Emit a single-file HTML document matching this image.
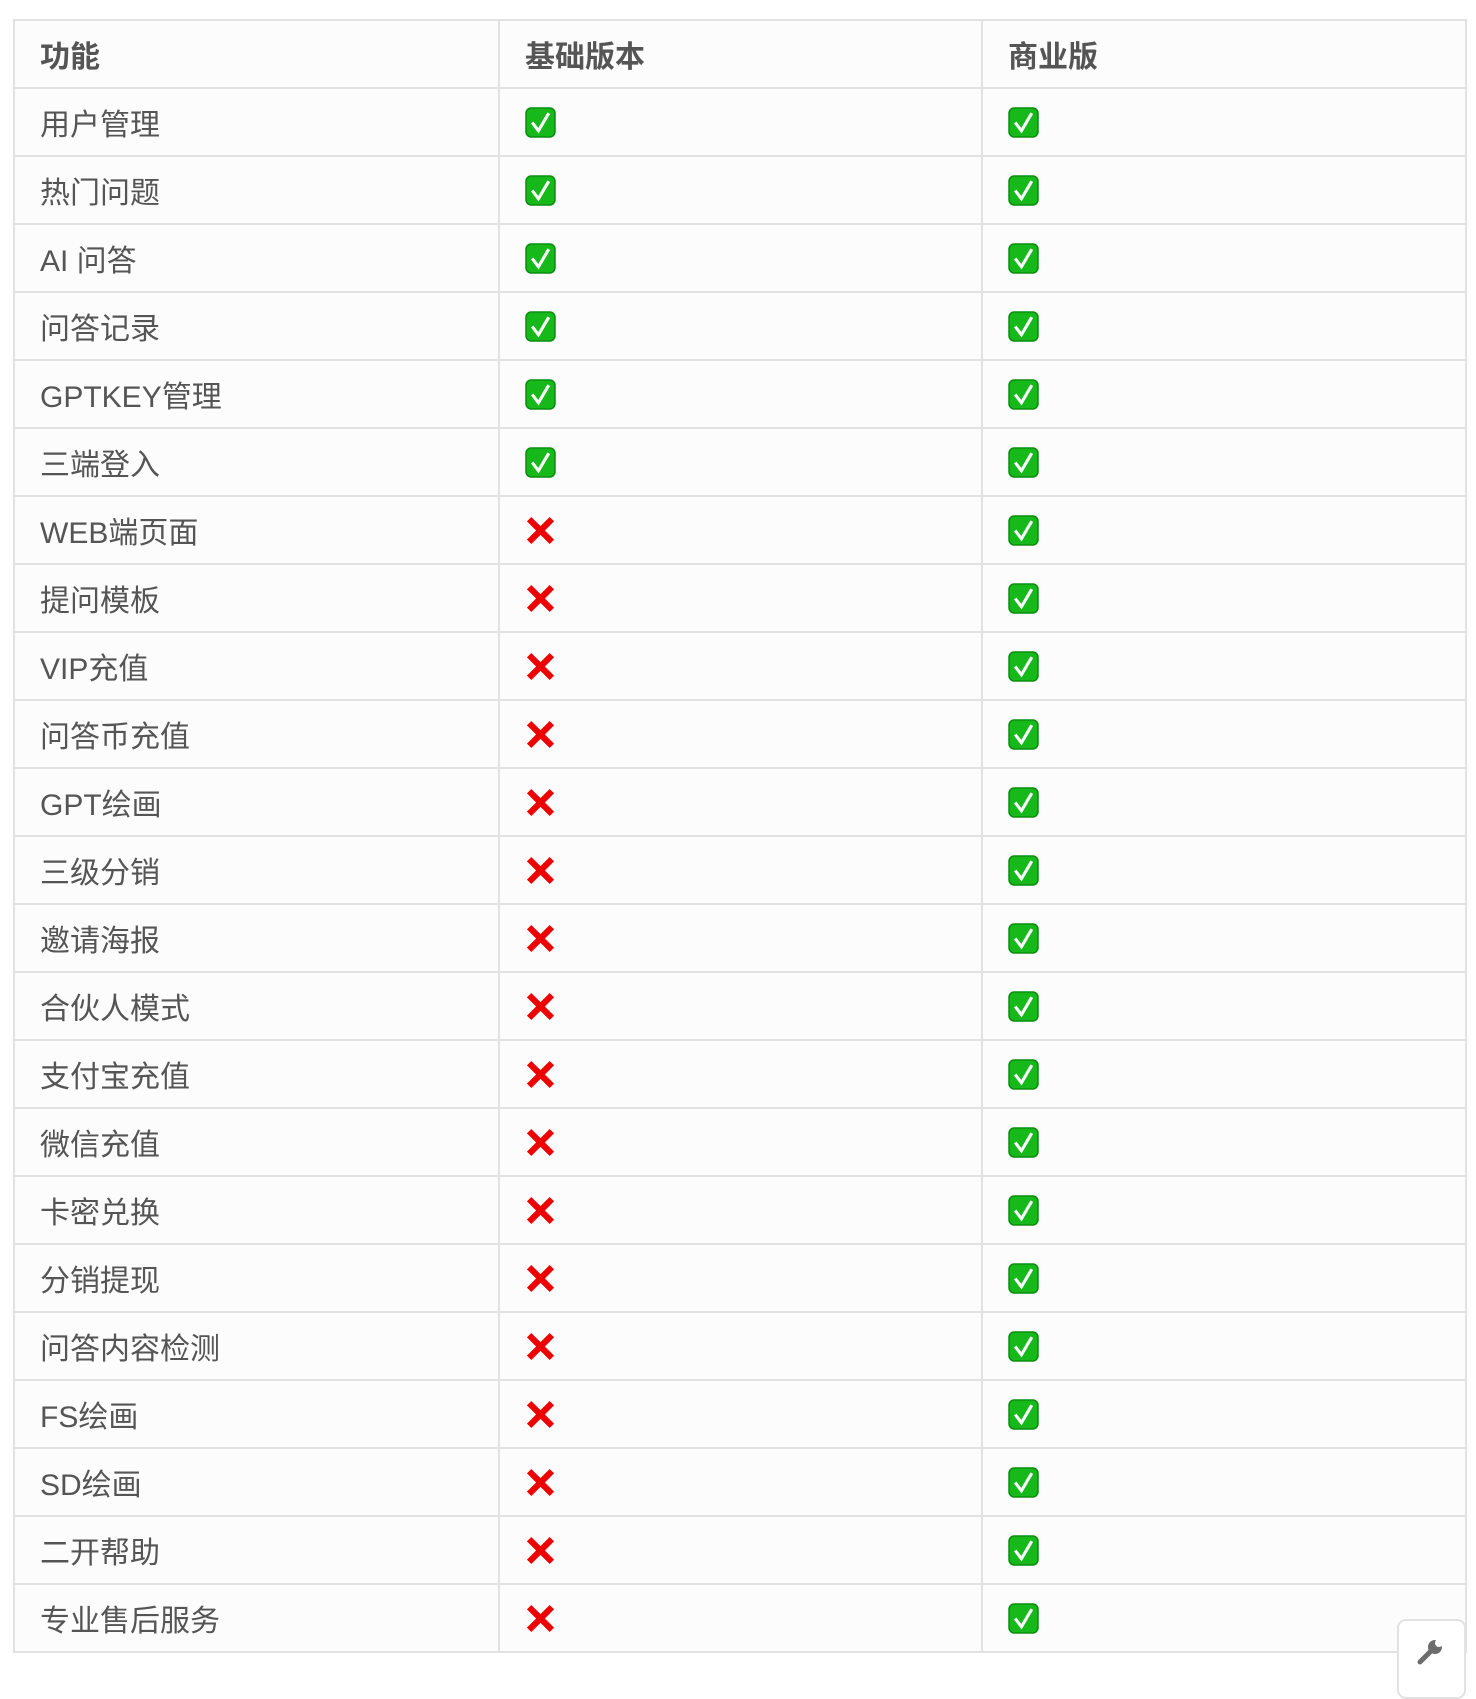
<!DOCTYPE html>
<html><head><meta charset="utf-8"><style>
html,body{margin:0;padding:0;background:#fff;width:1476px;height:1680px;overflow:hidden}
body{font-family:"Liberation Sans","Noto Sans CJK SC",sans-serif;color:#555}
table{position:absolute;left:13px;top:19px;width:1452px;table-layout:fixed;border-collapse:collapse;background:#fcfcfc}
tr{height:68px}
td,th{border:2px solid #e2e2e2;padding:0 0 0 25px;text-align:left;font-size:30px;font-weight:normal;vertical-align:middle;box-sizing:border-box}
th{font-weight:bold;color:#555}
td svg{display:block}
.w{position:absolute;left:1397px;top:1619px;width:69px;height:80px;border:2px solid #e2e2e2;border-radius:9px;background:#fff;box-sizing:border-box}
</style></head><body>
<table>
<colgroup><col style="width:485px"><col style="width:483px"><col style="width:484px"></colgroup>
<tr><th>功能</th><th>基础版本</th><th>商业版</th></tr>
</table>
<script>
var ok='<svg width="31" height="31" viewBox="0 0 30 30"><rect x="1" y="1" width="28" height="28" rx="5" fill="#16b81a" stroke="#0a8f0e" stroke-width="1.5"/><path d="M7 15 L13 23 L23 6" fill="none" stroke="#fff" stroke-width="3"/></svg>';
var no='<svg width="31" height="31" viewBox="0 0 30 30"><path d="M4 4 L26 26 M26 4 L4 26" stroke="#ee0000" stroke-width="6"/></svg>';
var rows=[["用户管理",1],["热门问题",1],["AI 问答",1],["问答记录",1],["GPTKEY管理",1],["三端登入",1],["WEB端页面",0],["提问模板",0],["VIP充值",0],["问答币充值",0],["GPT绘画",0],["三级分销",0],["邀请海报",0],["合伙人模式",0],["支付宝充值",0],["微信充值",0],["卡密兑换",0],["分销提现",0],["问答内容检测",0],["FS绘画",0],["SD绘画",0],["二开帮助",0],["专业售后服务",0]];
var h='';rows.forEach(function(r){h+='<tr><td>'+r[0]+'</td><td>'+(r[1]?ok:no)+'</td><td>'+ok+'</td></tr>'});
document.querySelector('table').insertAdjacentHTML('beforeend',h);
</script>
<div class="w"><svg style="position:absolute;left:18px;top:17px" width="28" height="28" viewBox="0 0 28 28"><path d="M3 24 L14 13" stroke="#6d6d6d" stroke-width="5" stroke-linecap="round"/><circle cx="18" cy="9" r="7" fill="#6d6d6d"/><circle cx="22" cy="5" r="4" fill="#fff"/></svg></div>
</body></html>
